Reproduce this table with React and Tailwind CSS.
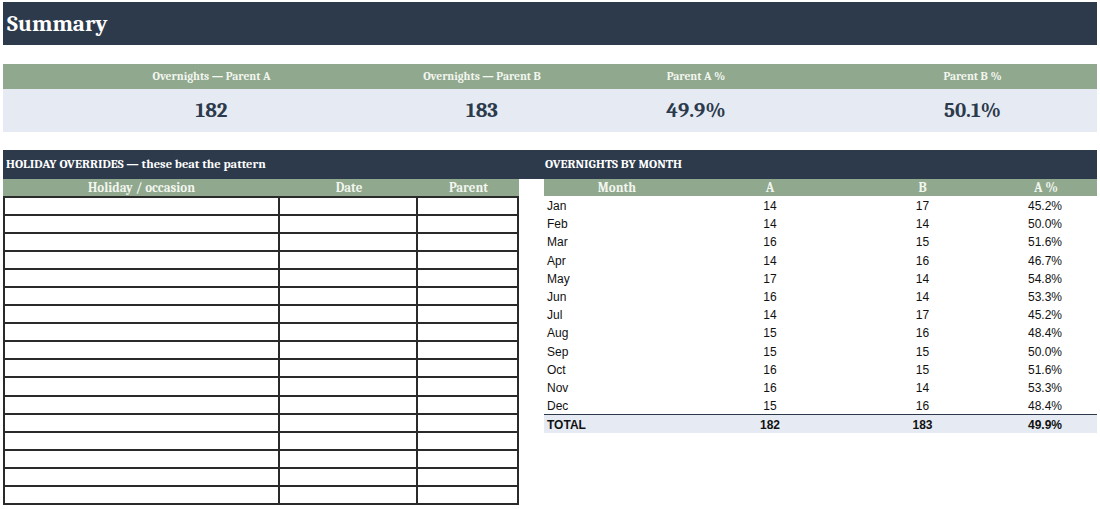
import React from "react";

const serif = "font-['Cambria','Liberation_Serif',serif]";
const sans = "font-['Liberation_Sans',Arial,sans-serif]";

const summary = [
  { label: "Overnights — Parent A", value: "182", w: "w-[417px]" },
  { label: "Overnights — Parent B", value: "183", w: "w-[124px]" },
  { label: "Parent A %", value: "49.9%", w: "w-[304px]" },
  { label: "Parent B %", value: "50.1%", w: "flex-1" },
];

const months = [
  ["Jan", 14, 17, "45.2%"],
  ["Feb", 14, 14, "50.0%"],
  ["Mar", 16, 15, "51.6%"],
  ["Apr", 14, 16, "46.7%"],
  ["May", 17, 14, "54.8%"],
  ["Jun", 16, 14, "53.3%"],
  ["Jul", 14, 17, "45.2%"],
  ["Aug", 15, 16, "48.4%"],
  ["Sep", 15, 15, "50.0%"],
  ["Oct", 16, 15, "51.6%"],
  ["Nov", 16, 14, "53.3%"],
  ["Dec", 15, 16, "48.4%"],
];

const overrideRows = Array.from({ length: 17 });

export default function App() {
  return (
    <div className="w-[1100px] h-[509px] bg-white overflow-hidden px-[3px] pt-[2px]">
      {/* title */}
      <div className="h-[43px] bg-[#2c3a4c] flex items-center pl-[4px]">
        <h1 className={`${serif} text-[23px] font-bold text-white leading-none`}>Summary</h1>
      </div>

      {/* summary strip */}
      <div className="mt-[19px]">
        <div className="flex h-[25px] bg-[#8fa88e]">
          {summary.map((s) => (
            <div key={s.label} className={`${s.w} flex items-center justify-center ${serif} text-[11.5px] font-bold text-[#f3f6ee]`}>
              {s.label}
            </div>
          ))}
        </div>
        <div className="flex h-[43px] bg-[#e6ebf3]">
          {summary.map((s) => (
            <div key={s.label} className={`${s.w} flex items-center justify-center ${serif} text-[21px] font-bold text-[#2c3a4c]`}>
              {s.value}
            </div>
          ))}
        </div>
      </div>

      {/* section bar */}
      <div className="mt-[18px] h-[29px] bg-[#2c3a4c] flex items-center">
        <div className={`w-[541px] pl-[3px] ${serif} text-[12.5px] font-bold text-white`}>
          HOLIDAY OVERRIDES — these beat the pattern
        </div>
        <div className={`pl-[1px] ${serif} text-[12.5px] font-bold text-white`}>OVERNIGHTS BY MONTH</div>
      </div>

      <div className="flex gap-[25px]">
        {/* holiday overrides */}
        <div className="w-[516px]">
          <div className={`flex h-[17px] bg-[#8fa88e] ${serif} text-[13px] font-bold text-[#f3f6ee]`}>
            <div className="w-[277px] text-center leading-[17px]">Holiday / occasion</div>
            <div className="w-[138px] text-center leading-[17px]">Date</div>
            <div className="flex-1 text-center leading-[17px]">Parent</div>
          </div>
          <div className="border-l-2 border-t-2 border-[#2a2a2a]">
            {overrideRows.map((_, i) => (
              <div key={i} className="flex h-[18.05px] border-b-2 border-[#2a2a2a]">
                <div className="w-[275px] border-r-2 border-[#2a2a2a]" />
                <div className="w-[138px] border-r-2 border-[#2a2a2a]" />
                <div className="flex-1 border-r-2 border-[#2a2a2a]" />
              </div>
            ))}
          </div>
        </div>

        {/* overnights by month */}
        <div className="flex-1">
          <div className={`flex h-[17px] bg-[#8fa88e] ${serif} text-[13px] font-bold text-[#f3f6ee]`}>
            <div className="w-[146px] text-center leading-[17px]">Month</div>
            <div className="w-[160px] text-center leading-[17px]">A</div>
            <div className="w-[145px] text-center leading-[17px]">B</div>
            <div className="flex-1 text-center leading-[17px]">A %</div>
          </div>
          {months.map(([m, a, b, p]) => (
            <div key={m} className={`flex h-[18.2px] items-center pt-[2px] ${sans} text-[12px] text-[#111]`}>
              <div className="w-[146px] pl-[3px]">{m}</div>
              <div className="w-[160px] text-center">{a}</div>
              <div className="w-[145px] text-center">{b}</div>
              <div className="flex-1 text-center pr-[2px]">{p}</div>
            </div>
          ))}
          <div className={`flex h-[18.5px] items-center pt-[1px] bg-[#e6ebf3] border-t-[1.5px] border-[#2c3a4c] ${sans} text-[12px] font-bold text-[#111]`}>
            <div className="w-[146px] pl-[3px]">TOTAL</div>
            <div className="w-[160px] text-center">182</div>
            <div className="w-[145px] text-center">183</div>
            <div className="flex-1 text-center pr-[2px]">49.9%</div>
          </div>
        </div>
      </div>
    </div>
  );
}
